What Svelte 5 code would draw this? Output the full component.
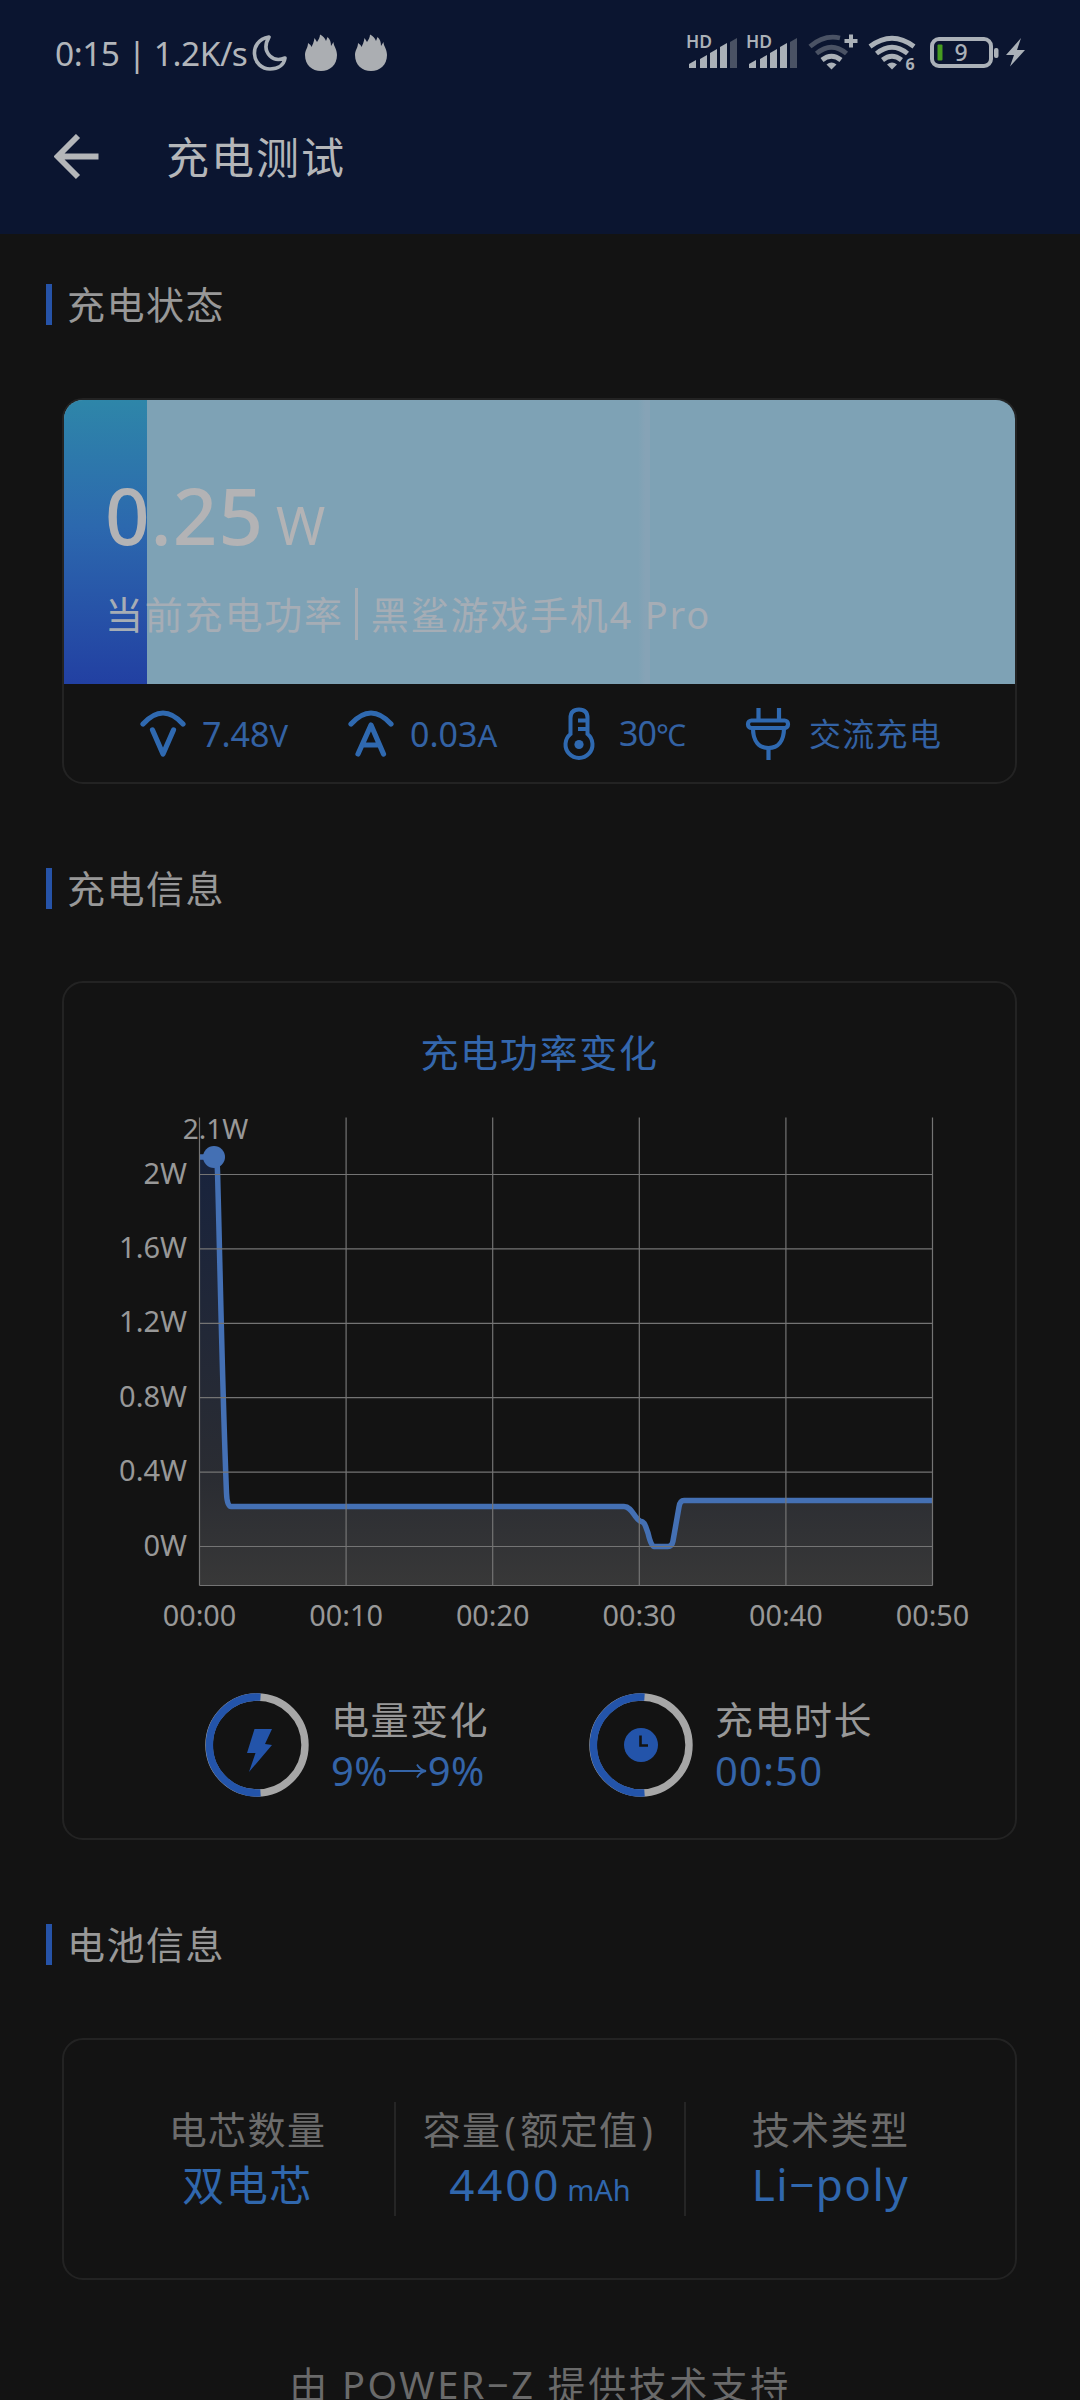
<script>
  const yTicks = ['2W', '1.6W', '1.2W', '0.8W', '0.4W', '0W'];
  const xTicks = ['00:00', '00:10', '00:20', '00:30', '00:40', '00:50'];
  const signalBars = [
    { x: 3, y: 30 },
    { x: 14, y: 25 },
    { x: 24, y: 19 },
    { x: 34, y: 13 },
    { x: 44, y: 8, dim: true }
  ];

  // Chart geometry, in svg units
  const left = 135.5;
  const stepX = 146.6;
  const topY = 191.5;
  const stepY = 74.4;

  const curve =
    'M135.5 174 H149 C152 174 153 176 153.500 188 C156 278 158 398 162.5 510 Q163 523.5 167 523.5 H560 C568 523.5 570 535 576 538 C581 539 581 542 584 550 Q587 563.5 590 563.5 H604 Q608 563.5 609 558 L615 524 Q616 517.5 620 517.5 H868.5';
</script>

<div class="page">
  <header>
    <div class="status">
      <span class="clock">0:15 | 1.2K/s</span>
      <svg class="moon" width="36" height="38" viewBox="0 0 36 38">
        <path d="M17 3 C6 5 2 13 2.500 20 C3 29 10 35 18 35 C26 35 32 31 33 24 C28 26 22 26 18 22 C13 17 13 10 17 3 Z" fill="none" stroke="#abb1b8" stroke-width="3.6" stroke-linejoin="round" />
      </svg>
      {#each [0, 1] as i}
        <svg class="flame" width="34" height="38" viewBox="0 0 34 38">
          <path d="M4 9 L6.500 11 L7.500 13 C8.500 11 10 8 10.500 4 L13 8 C14.500 6 16 3 16 0.500 C19 2 21 4 22 7 L23.500 3 C26 5 27 8 27 12 L29.500 8 C29.500 12 33 15 33 21 C33 31 26 37 17 37 C8 37 1 31 1 21 C1 16 4 14 4 9 Z" fill="#abaeb2" />
        </svg>
      {/each}

      <div class="status-right">
        {#each [0, 1] as sim}
          <svg class="signal" width="54" height="44" viewBox="0 0 54 44">
            <text x="0" y="18" class="hd">HD</text>
            {#each signalBars as b}
              <path d="M{b.x} 38 V{b.y + 4} L{b.x + 7} {b.y} V38 Z" fill={b.dim ? '#4a5264' : '#abb1b8'} />
            {/each}
          </svg>
        {/each}
        <svg class="wifi" width="52" height="44" viewBox="0 0 52 44">
          <g fill="none" stroke-width="4.800">
            <path d="M2 16.500 Q16 4.500 32 8" stroke="#4a5264" />
            <path d="M8.500 23.500 Q23.500 11 38.500 23.500" stroke="#4a5264" />
            <path d="M14 30 Q23.500 22.500 33 30" stroke="#abb1b8" />
          </g>
          <path d="M18.500 34.500 Q23.500 30.500 28.500 34.500 L23.500 39.500 Z" fill="#abb1b8" />
          <path d="M43 4.500 V17.500 M36.500 11 H49.500" stroke="#abb1b8" stroke-width="4" />
        </svg>
        <svg class="wifi" width="52" height="44" viewBox="0 0 52 44">
          <g fill="none" stroke="#abb1b8" stroke-width="4.800">
            <path d="M2 16.500 Q24 0 46 16.500" />
            <path d="M8.500 23.500 Q24 11 39.500 23.500" />
            <path d="M14.500 30 Q24 22.500 33.500 30" />
          </g>
          <path d="M19 34.500 Q24 30.500 29 34.500 L24 39.500 Z" fill="#abb1b8" />
          <rect x="36" y="27" width="14" height="17" fill="#0b1530" />
          <text x="37.500" y="40" class="six">6</text>
        </svg>
        <svg width="98" height="44" viewBox="0 0 98 44">
          <rect x="2" y="9" width="59" height="27" rx="7" fill="none" stroke="#abb1b8" stroke-width="4" />
          <rect x="7.500" y="14.500" width="5" height="16" rx="1" fill="#479c20" />
          <text x="31" y="31" text-anchor="middle" class="level">9</text>
          <rect x="64" y="18" width="4.500" height="10" rx="2" fill="#abb1b8" />
          <path d="M91 8 L76 25 H84 L80 36.500 L95 20 H87 Z" fill="#abb1b8" />
        </svg>
      </div>
    </div>
    <div class="titlebar">
      <svg width="46" height="46" viewBox="0 0 46 46">
        <path d="M24 2 L3.500 22.500 L24 43 M4 22.500 H44.500" fill="none" stroke="#b4b6b9" stroke-width="5.800" />
      </svg>
      <h1>充电测试</h1>
    </div>
  </header>

  <main>
    <h2 class="section">充电状态</h2>
    <section class="card power-card">
      <div class="power">
        <div class="fill"></div>
        <div class="stripe"></div>
        <div class="power-text">
          <div class="watts">0.25<small>W</small></div>
          <div class="device"><span>当前充电功率</span><i></i><span>黑鲨游戏手机4 Pro</span></div>
        </div>
      </div>
      <div class="stats">
        <svg width="48" height="52" viewBox="0 0 48 52">
          <g fill="none" stroke="#2f69b0" stroke-width="5.200" stroke-linecap="round" stroke-linejoin="round">
            <path d="M4 16 Q24 -6 44 16" />
            <path d="M13.500 22 L24 46 L34.500 22" />
          </g>
        </svg>
        <span class="volt">7.48<small>V</small></span>
        <svg width="48" height="52" viewBox="0 0 48 52">
          <g fill="none" stroke="#2f69b0" stroke-width="5.200" stroke-linecap="round" stroke-linejoin="round">
            <path d="M4 16 Q24 -6 44 16" />
            <path d="M11 46 L24 17 L36.500 46 M17 37 H31" />
          </g>
        </svg>
        <span class="amp">0.03<small>A</small></span>
        <svg width="34" height="56" viewBox="0 0 34 56">
          <path d="M8.500 28 V12 Q8.500 3.500 17 3.500 Q25.500 3.500 25.500 12 V28 A13.500 13.500 0 1 1 8.500 28 Z M25 14.500 H16 M25 23 H16" fill="none" stroke="#2f69b0" stroke-width="4" />
          <circle cx="17" cy="38.500" r="4.600" fill="#2f69b0" />
        </svg>
        <span class="temp">30<i>℃</i></span>
        <svg width="46" height="56" viewBox="0 0 46 56">
          <g fill="none" stroke="#2f69b0" stroke-width="4.200">
            <path d="M13.500 2 V15 M34 2 V15 M23.500 43 V54" />
            <rect x="3" y="14.500" width="40" height="7.500" rx="3.500" />
            <path d="M8 22 C8 35 14 42 23.500 42 C33 42 39 35 39 22" />
          </g>
        </svg>
        <span class="mode">交流充电</span>
      </div>
    </section>

    <h2 class="section second">充电信息</h2>
    <section class="card chart-card">
      <h3>充电功率变化</h3>
      <svg class="chart" width="950" height="689" viewBox="0 0 950 689">
        <defs>
          <linearGradient id="area" x1="0" y1="173" x2="0" y2="602" gradientUnits="userSpaceOnUse">
            <stop offset="0" stop-color="#18233d" />
            <stop offset="0.750" stop-color="#2a2c32" />
            <stop offset="1" stop-color="#383838" />
          </linearGradient>
        </defs>
        <path d="{curve} V602.500 H135.500 Z" fill="url(#area)" />
        <path d={curve} fill="none" stroke="#4470b4" stroke-width="5.500" stroke-linejoin="round" />
        <g stroke="#747474" stroke-width="1.200">
          {#each xTicks as t, i}
            <line x1={left + i * stepX} x2={left + i * stepX} y1="134.500" y2="602.500" />
          {/each}
          {#each yTicks as t, i}
            <line x1={left} x2="868.500" y1={topY + i * stepY} y2={topY + i * stepY} />
          {/each}
          <line x1={left} x2="868.500" y1="602.500" y2="602.500" />
        </g>
        <circle cx="150" cy="174" r="11" fill="#4470b4" />
        <g class="axis">
          {#each yTicks as t, i}
            <text x="123" y={topY + i * stepY + 9} text-anchor="end" class="y-label">{t}</text>
          {/each}
          {#each xTicks as t, i}
            <text x={left + i * stepX} y="643" text-anchor="middle">{t}</text>
          {/each}
          <text x="151.500" y="155.500" text-anchor="middle" class="peak">2.1W</text>
        </g>
      </svg>
      <div class="summary">
        <svg width="104" height="104" viewBox="0 0 104 104">
          <circle cx="52" cy="52" r="48" fill="none" stroke="#a7a7a7" stroke-width="7.400" />
          <path d="M55.500 4.100 A48 48 0 1 0 55.500 99.900" fill="none" stroke="#2354aa" stroke-width="7.400" />
          <path d="M49.500 36 H67 L60 51 L67 52 L44 79 L50.500 60 H42 Z" fill="#2354aa" />
        </svg>
        <div class="summary-text battery">
          <p>电量变化</p>
          <strong>9%<svg width="40" height="18" viewBox="0 0 40 18"><path d="M1 9 H37 M29 2.500 Q32 8 38 9 Q32 10 29 15.500" fill="none" stroke="#3464a8" stroke-width="1.800" /></svg>9%</strong>
        </div>
        <svg width="104" height="104" viewBox="0 0 104 104">
          <circle cx="52" cy="52" r="48" fill="none" stroke="#a7a7a7" stroke-width="7.400" />
          <path d="M55.500 4.100 A48 48 0 1 0 55.500 99.900" fill="none" stroke="#2354aa" stroke-width="7.400" />
          <circle cx="52" cy="52" r="17" fill="#2354aa" />
          <path d="M51.500 42.500 V52.500 H59" fill="none" stroke="#131313" stroke-width="2.600" />
        </svg>
        <div class="summary-text duration">
          <p>充电时长</p>
          <strong>00:50</strong>
        </div>
      </div>
    </section>

    <h2 class="section third">电池信息</h2>
    <section class="card info-card">
      <div class="info cells">
        <p>电芯数量</p>
        <strong class="cjk">双电芯</strong>
      </div>
      <div class="info capacity">
        <p>容量<b>(</b>额定值<b>)</b></p>
        <strong>4400<small>mAh</small></strong>
      </div>
      <div class="info tech">
        <p>技术类型</p>
        <strong>Li−poly</strong>
      </div>
    </section>
    <footer>由 POWER−Z 提供技术支持</footer>
  </main>
</div>

<style>
  :global(body) {
    background: #131313;
    overflow: hidden;
  }

  .page {
    width: 1080px;
    height: 2400px;
    overflow: hidden;
    background: #131313;
    font-family: 'Noto Sans', 'Noto Sans CJK SC', sans-serif;
    color: #989898;
  }

  h1, h2, h3, p {
    margin: 0;
    font-weight: 400;
  }

  strong, b {
    font-weight: 400;
  }

  svg {
    flex: none;
    display: block;
  }

  header {
    height: 234px;
    background: #0b1530;
    color: #b2b5ba;
  }

  .status {
    display: flex;
    align-items: center;
    padding: 32px 0 0 55px;
    height: 42px;
  }

  .clock {
    width: 197px;
    font-size: 33.5px;
    line-height: 42px;
    white-space: nowrap;
    letter-spacing: -0.5px;
  }

  .moon {
    margin-right: 16px;
  }

  .flame {
    margin-right: 16px;
  }

  .status-right {
    display: flex;
    align-items: center;
    margin-left: auto;
    gap: 6px;
    padding: 0 52px 3px 0;
  }

  .status-right .wifi {
    margin-right: 2px;
  }

  .status-right .wifi + .wifi {
    margin-right: 4px;
  }

  .status-right .signal + .wifi {
    margin-left: 2px;
  }

  .hd {
    font-size: 17.5px;
    font-weight: 600;
    fill: #abb1b8;
  }

  .six {
    font-size: 16px;
    font-weight: 700;
    fill: #abb1b8;
  }

  .level {
    font-size: 23px;
    font-weight: 500;
    fill: #abb1b8;
  }

  .titlebar {
    display: flex;
    align-items: center;
    padding-left: 54px;
    margin-top: 53px;
    height: 60px;
  }

  h1 {
    margin: 2px 0 0 66px;
    font-size: 43px;
    line-height: 60px;
    letter-spacing: 2px;
    color: #b4b6b9;
  }

  .section {
    display: flex;
    align-items: center;
    height: 42px;
    margin: 49px 0 0 46px;
    padding-bottom: 73px;
    font-size: 38px;
    line-height: 42px;
    letter-spacing: 1.5px;
    color: #989898;
  }

  .section::before {
    content: '';
    width: 6px;
    height: 41px;
    margin-right: 15px;
    background: #2653a8;
  }

  .section.second {
    margin-top: 83px;
    padding-bottom: 72px;
  }

  .section.third {
    margin-top: 83px;
    padding-bottom: 73px;
  }

  .card {
    box-sizing: border-box;
    width: 955px;
    margin-left: 62px;
    border: 2px solid #232323;
    border-radius: 21px;
    overflow: hidden;
  }

  .power-card {
    height: 386px;
  }

  .power {
    position: relative;
    height: 284px;
    background: #7ea2b5;
  }

  .fill {
    position: absolute;
    inset: 0 auto 0 0;
    width: 83px;
    background: linear-gradient(#2e86a9, #2c68ae 45%, #2240a2);
  }

  .stripe {
    position: absolute;
    inset: 0 auto 0 574px;
    width: 12px;
    background: linear-gradient(90deg, #7ea2b5, #86a3b6 60%, #86a3b6);
  }

  .power-text {
    position: relative;
    padding: 73px 0 0 41px;
    color: #b3b3b5;
  }

  .watts {
    font-size: 78px;
    font-weight: 500;
    line-height: 84px;
    letter-spacing: 1px;
  }

  .watts small {
    font-size: 53px;
    font-weight: 400;
    margin-left: 12px;
  }

  .device {
    display: flex;
    align-items: center;
    margin-top: 21px;
    font-size: 38px;
    line-height: 52px;
    letter-spacing: 1.8px;
    color: #a6adb5;
  }

  .device i {
    width: 3px;
    height: 52px;
    margin: 0 13px 0 11px;
    background: #a6adb5;
  }

  .stats {
    display: flex;
    align-items: center;
    height: 100px;
    padding-left: 75px;
    font-size: 34px;
    color: #3362a4;
    line-height: 50px;
    white-space: nowrap;
  }

  .stats small {
    font-size: 31px;
  }

  .volt, .amp {
    margin-left: 15px;
    width: 145px;
  }

  .stats .amp {
    width: 152px;
  }

  .temp {
    margin-left: 23px;
    width: 126px;
    letter-spacing: -1px;
  }

  .temp i {
    font-style: normal;
    font-size: 30px;
  }

  .mode {
    margin-left: 18px;
    font-size: 32px;
    letter-spacing: 1.3px;
  }

  .chart-card {
    height: 859px;
    position: relative;
  }

  h3 {
    height: 0;
    padding-top: 43px;
    text-align: center;
    font-size: 38px;
    line-height: 52px;
    letter-spacing: 1.7px;
    color: #3467ad;
  }

  .chart {
    margin-top: -43px;
  }

  .axis {
    font-size: 28.8px;
    fill: #989898;
  }

  .y-label {
    font-size: 29px;
  }

  .peak {
    font-size: 28px;
  }

  .summary {
    display: flex;
    align-items: center;
    margin-top: 21px;
    padding-left: 141px;
  }

  .summary-text {
    margin: 0 0 0 22px;
  }

  .summary-text.battery {
    width: 258px;
  }

  .summary p {
    font-size: 38px;
    line-height: 52px;
    letter-spacing: 1.5px;
  }

  .summary strong {
    display: flex;
    align-items: center;
    font-size: 40px;
    line-height: 52px;
    color: #3464a8;
    letter-spacing: 0.3px;
  }

  .summary .duration strong {
    letter-spacing: 1.2px;
  }

  .info-card {
    display: flex;
    height: 242px;
    padding-top: 62px;
  }

  .info {
    box-sizing: border-box;
    height: 114px;
    text-align: center;
  }

  .cells {
    width: 332px;
    padding-left: 37px;
    border-right: 2px solid #252525;
  }

  .capacity {
    width: 290px;
    border-right: 2px solid #252525;
  }

  .tech {
    width: 289px;
  }

  .info p {
    padding-top: 1px;
    font-size: 38px;
    line-height: 52px;
    letter-spacing: 1.4px;
    color: #6c6c6c;
    white-space: nowrap;
  }

  .info b {
    padding: 0 3px;
  }

  .info strong {
    display: block;
    font-size: 44px;
    line-height: 58px;
    letter-spacing: 1.5px;
    color: #3067ad;
  }

  .capacity strong {
    letter-spacing: 2.8px;
  }

  .info small {
    margin-left: 6px;
    font-size: 29px;
    letter-spacing: 0;
  }

  .info .cjk {
    font-size: 42px;
    padding-top: 1px;
  }

  footer {
    margin-top: 78px;
    text-align: center;
    font-size: 38px;
    line-height: 52px;
    letter-spacing: 2.5px;
    color: #6a6a6a;
  }
</style>
